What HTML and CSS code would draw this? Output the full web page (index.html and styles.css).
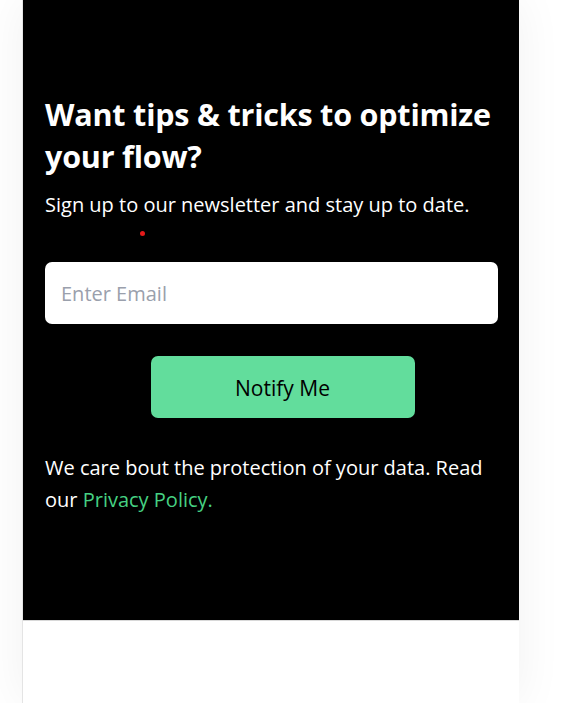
FILE: index.html
```html
<!DOCTYPE html>
<html lang="en">
<head>
<meta charset="utf-8">
<title>Newsletter</title>
<link rel="stylesheet" href="styles.css">
</head>
<body>
<div class="card">
  <section class="hero">
    <h1 class="title">Want tips &amp; tricks to optimize your flow?</h1>
    <p class="lead">Sign up to our newsletter and stay up to date.</p>
    <div class="dot-row"><span class="dot"></span></div>
    <form class="form">
      <input class="email" type="email" placeholder="Enter Email">
      <button class="notify" type="button">Notify Me</button>
    </form>
    <p class="note">We care bout the protection of your data. Read our <a class="link" href="#">Privacy Policy.</a></p>
  </section>
</div>
</body>
</html>
```

FILE: styles.css
```css
html, body {
  margin: 0;
  padding: 0;
  background: #fff;
  height: 100%;
  overflow: hidden;
}
body {
  font-family: "Open Sans", "Noto Sans", sans-serif;
}
.card {
  width: 496px;
  margin-left: 22px;
  min-height: 703px;
  border-left: 1px solid #e4e4e4;
  box-shadow: 0 0 45px rgba(0, 0, 0, 0.06);
  background: #fff;
}
.hero {
  background: #000;
  height: 621px;
  box-sizing: border-box;
  padding: 93px 21px 0 22px;
  border-bottom: 1px solid #d8d8d8;
  color: #fff;
}
.title {
  margin: 0;
  font-size: 30.5px;
  line-height: 42px;
  font-weight: 700;
  letter-spacing: -0.2px;
}
.lead {
  margin: 15px 0 0;
  font-size: 20px;
  line-height: 26px;
}
.dot-row {
  height: 44px;
  position: relative;
}
.dot {
  position: absolute;
  left: 95px;
  top: 13px;
  width: 5px;
  height: 5px;
  border-radius: 50%;
  background: #e51a1a;
}
.form {
  display: flex;
  flex-direction: column;
  align-items: center;
  gap: 32px;
}
.email {
  width: 100%;
  box-sizing: border-box;
  height: 62px;
  border: none;
  border-radius: 7px;
  padding: 0 16px;
  font-family: inherit;
  font-size: 20px;
  color: #111;
  background: #fff;
  outline: none;
}
.email::placeholder {
  color: #9aa0ac;
}
.notify {
  width: 264px;
  height: 62px;
  margin-left: 22px;
  padding-top: 3px;
  border: none;
  border-radius: 7px;
  background: #62dd9c;
  color: #000;
  font-family: inherit;
  font-size: 21px;
  cursor: pointer;
}
.note {
  margin: 34px 0 0;
  font-size: 20px;
  line-height: 32px;
}
.link {
  color: #46d183;
  text-decoration: none;
}
```
